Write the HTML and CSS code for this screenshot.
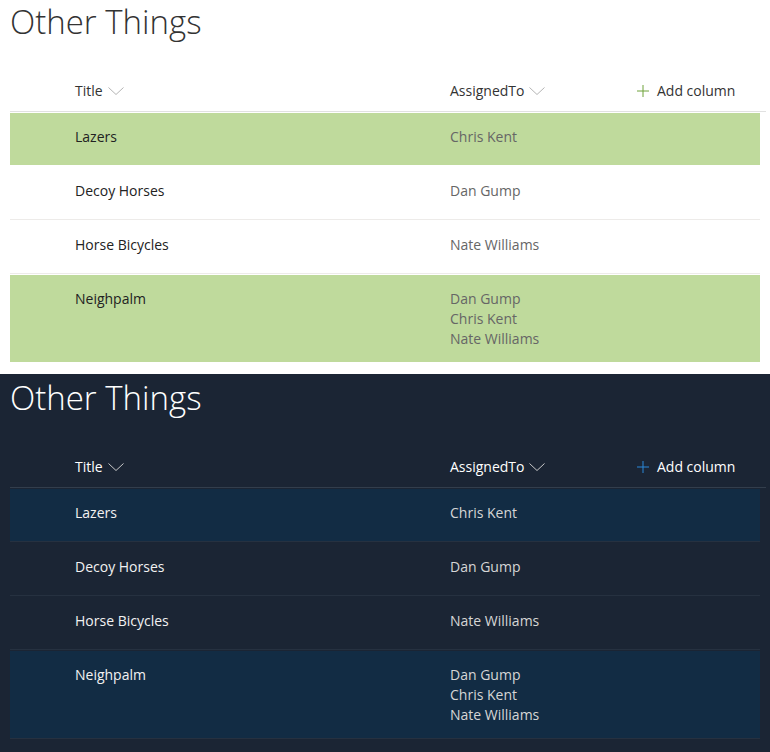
FILE: index.html
```html
<!DOCTYPE html>
<html lang="en">
<head>
<meta charset="utf-8">
<title>Other Things</title>
<link rel="stylesheet" href="styles.css">
</head>
<body>
<section class="panel light">
  <h1 class="heading">Other Things</h1>
  <div class="list">
    <div class="hdr">
      <div class="col-title">Title<svg class="chev" width="16" height="8" viewBox="0 0 16 8"><path d="M0.5 0.5 L8 7.5 L15.5 0.5" fill="none" stroke="currentColor" stroke-width="1"/></svg></div>
      <div class="col-assigned">AssignedTo<svg class="chev" width="16" height="8" viewBox="0 0 16 8"><path d="M0.5 0.5 L8 7.5 L15.5 0.5" fill="none" stroke="currentColor" stroke-width="1"/></svg></div>
      <div class="col-add"><svg class="plus" width="12" height="12" viewBox="0 0 12 12"><path d="M6 0 V12 M0 6 H12" fill="none" stroke="currentColor" stroke-width="1"/></svg>Add column</div>
    </div>
    <div class="row hl"><div class="col-title">Lazers</div><div class="col-assigned"><div>Chris Kent</div></div></div>
    <div class="row"><div class="col-title">Decoy Horses</div><div class="col-assigned"><div>Dan Gump</div></div></div>
    <div class="row"><div class="col-title">Horse Bicycles</div><div class="col-assigned"><div>Nate Williams</div></div></div>
    <div class="row hl"><div class="col-title">Neighpalm</div><div class="col-assigned"><div>Dan Gump</div><div>Chris Kent</div><div>Nate Williams</div></div></div>
  </div>
</section>
<section class="panel dark">
  <h1 class="heading">Other Things</h1>
  <div class="list">
    <div class="hdr">
      <div class="col-title">Title<svg class="chev" width="16" height="8" viewBox="0 0 16 8"><path d="M0.5 0.5 L8 7.5 L15.5 0.5" fill="none" stroke="currentColor" stroke-width="1"/></svg></div>
      <div class="col-assigned">AssignedTo<svg class="chev" width="16" height="8" viewBox="0 0 16 8"><path d="M0.5 0.5 L8 7.5 L15.5 0.5" fill="none" stroke="currentColor" stroke-width="1"/></svg></div>
      <div class="col-add"><svg class="plus" width="12" height="12" viewBox="0 0 12 12"><path d="M6 0 V12 M0 6 H12" fill="none" stroke="currentColor" stroke-width="1"/></svg>Add column</div>
    </div>
    <div class="row hl"><div class="col-title">Lazers</div><div class="col-assigned"><div>Chris Kent</div></div></div>
    <div class="row"><div class="col-title">Decoy Horses</div><div class="col-assigned"><div>Dan Gump</div></div></div>
    <div class="row"><div class="col-title">Horse Bicycles</div><div class="col-assigned"><div>Nate Williams</div></div></div>
    <div class="row hl"><div class="col-title">Neighpalm</div><div class="col-assigned"><div>Dan Gump</div><div>Chris Kent</div><div>Nate Williams</div></div></div>
  </div>
</section>
</body>
</html>
```

FILE: styles.css
```css
* { box-sizing: border-box; }
html, body { margin: 0; padding: 0; }
body {
  width: 770px;
  height: 752px;
  overflow: hidden;
  font-family: "Open Sans", "Noto Sans", "Liberation Sans", sans-serif;
  font-size: 14px;
}
.panel {
  padding: 0 0 11px 10px;
}
.light { background: #ffffff; color: #333333; height: 374px; }
.dark { background: #1b2534; color: #ffffff; padding-top: 2px; height: 378px; }

.heading {
  margin: 0 0 27px 0;
  font-size: 33px;
  font-weight: 300;
  line-height: 44px;
}
.list { width: 750px; }
.hdr {
  display: flex;
  align-items: center;
  height: 41px;
  margin-right: -6px;
  padding-left: 65px;
  border-bottom: 1px solid;
  line-height: 20px;
}
.light .hdr { border-color: #e1e1e1; color: #333333; }
.dark .hdr { border-color: #333e4c; color: #ffffff; }
.hdr .col-title, .hdr .col-assigned { display: flex; align-items: center; }
.col-title { width: 375px; flex: none; }
.col-assigned { width: 187px; flex: none; }
.col-add { display: flex; align-items: center; }
.chev { margin-left: 5px; margin-top: -1px; }
.light .chev { color: #b4b4b4; }
.dark .chev { color: #c8c8c8; }
.plus { margin-right: 8px; }
.light .plus { color: #6ea23a; }
.dark .plus { color: #2b88d8; }

.row {
  display: flex;
  min-height: 54px;
  padding: 14px 0 13px 65px;
  border-top: 1px solid transparent;
  border-bottom: 1px solid;
  background-clip: padding-box;
  line-height: 20px;
}
.light .row { border-bottom-color: #edebe9; color: #222222; }
.light .row .col-assigned { color: #666666; }
.light .row.hl { background-color: #bfda9c; border-bottom-color: #ffffff; }
.dark .row { border-bottom-color: #263140; color: #f2f2f2; }
.dark .row .col-assigned { color: #d6d6d6; }
.dark .row.hl { background-color: #122c44; }
```
